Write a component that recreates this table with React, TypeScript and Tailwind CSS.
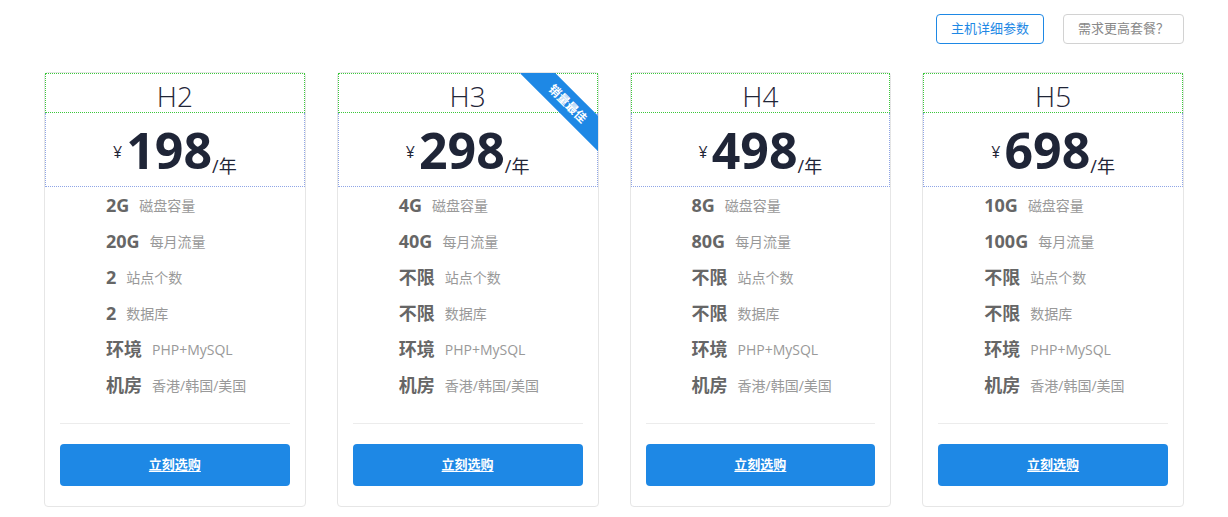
import React from "react";

type Plan = {
  name: string;
  price: string;
  disk: string;
  traffic: string;
  sites: string;
  db: string;
  hot?: boolean;
};

const PLANS: Plan[] = [
  { name: "H2", price: "198", disk: "2G", traffic: "20G", sites: "2", db: "2" },
  { name: "H3", price: "298", disk: "4G", traffic: "40G", sites: "不限", db: "不限", hot: true },
  { name: "H4", price: "498", disk: "8G", traffic: "80G", sites: "不限", db: "不限" },
  { name: "H5", price: "698", disk: "10G", traffic: "100G", sites: "不限", db: "不限" },
];

const FONT = { fontFamily: '"Open Sans", "Noto Sans CJK SC", sans-serif' };

function Row({ value, label }: { value: string; label: string }) {
  return (
    <div className="flex h-[36px] items-center gap-[10px]">
      <span className="text-[18px] font-bold text-[#666]">{value}</span>
      <span className="text-[14px] text-[#999]">{label}</span>
    </div>
  );
}

function Ribbon() {
  return (
    <div className="pointer-events-none absolute right-0 top-0 h-[78px] w-[78px] overflow-hidden">
      <div className="absolute left-[-7px] top-[18px] flex h-[25px] w-[110px] rotate-45 items-center justify-center bg-[#1e88e5] text-[12px] font-bold text-white">
        销量最佳
      </div>
    </div>
  );
}

function Card({ plan }: { plan: Plan }) {
  return (
    <div className="relative flex flex-col rounded-[4px] border border-[#e6e6e6] bg-white">
      <div className="flex h-[40px] items-end justify-center border border-dotted border-[#3cc83c] pb-[2px] text-[28px] font-light leading-none text-[#1f2537]">
        {plan.name}
      </div>
      <div className="flex h-[74px] items-center justify-center border border-t-0 border-dotted border-[#8fa5e6] text-[#1f2537]">
        <span className="mr-[4px] translate-y-[2px] text-[16px]">¥</span>
        <span className="text-[50px] font-bold leading-none">{plan.price}</span>
        <span className="mt-[34px] text-[18px]">/年</span>
      </div>
      <div className="flex flex-col pl-[61px]">
        <Row value={plan.disk} label="磁盘容量" />
        <Row value={plan.traffic} label="每月流量" />
        <Row value={plan.sites} label="站点个数" />
        <Row value={plan.db} label="数据库" />
        <Row value="环境" label="PHP+MySQL" />
        <Row value="机房" label="香港/韩国/美国" />
      </div>
      <div className="mx-[15px] mt-[20px] border-t border-[#ececec]" />
      <div className="px-[15px] pb-[20px] pt-[20px]">
        <button className="h-[42px] w-full rounded-[4px] bg-[#1e88e5] text-[13px] font-bold text-white underline underline-offset-2">
          立刻选购
        </button>
      </div>
      {plan.hot && <Ribbon />}
    </div>
  );
}

export default function App() {
  return (
    <div className="min-h-[517px] bg-white" style={FONT}>
      <div className="mx-auto w-[1140px] pt-[14px]">
        <div className="flex justify-end gap-[19px]">
          <button className="h-[30px] w-[108px] rounded-[4px] border border-[#1e88e5] text-[13px] text-[#1e88e5]">
            主机详细参数
          </button>
          <button className="h-[30px] w-[121px] rounded-[4px] border border-[#d2d2d2] text-[13px] text-[#888]">
            需求更高套餐？
          </button>
        </div>
        <div className="mt-[28px] grid grid-cols-4 gap-[31px]">
          {PLANS.map((p) => (
            <Card key={p.name} plan={p} />
          ))}
        </div>
      </div>
    </div>
  );
}
